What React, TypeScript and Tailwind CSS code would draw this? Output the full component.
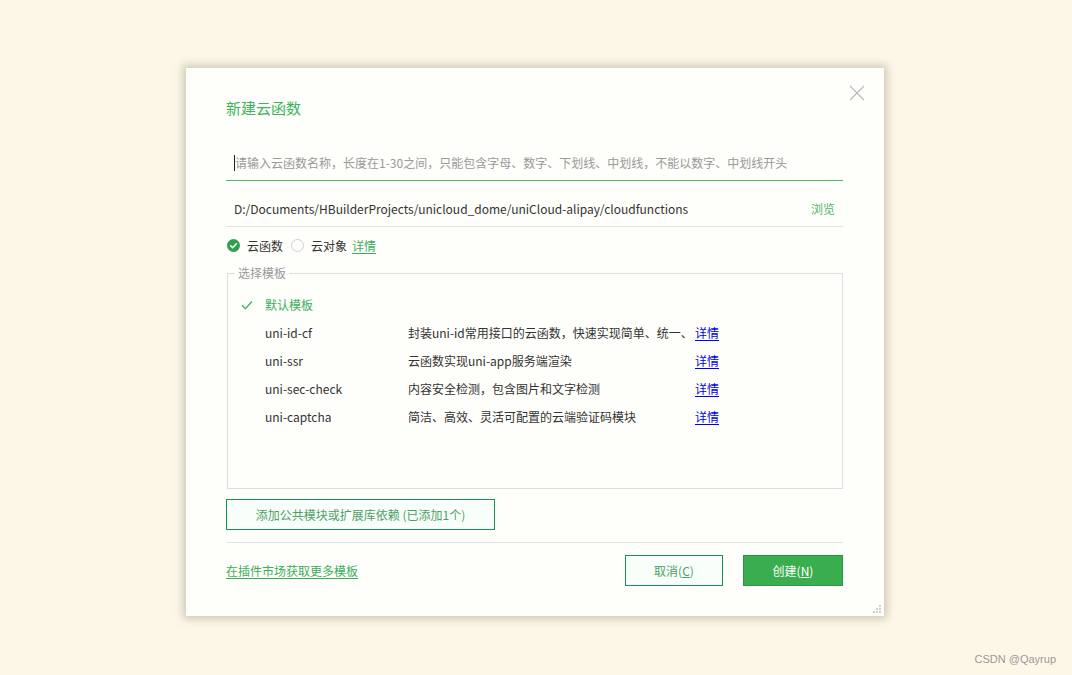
import React from 'react';

const templates = [
  { name: 'uni-id-cf', desc: '封装uni-id常用接口的云函数，快速实现简单、统一、' },
  { name: 'uni-ssr', desc: '云函数实现uni-app服务端渲染' },
  { name: 'uni-sec-check', desc: '内容安全检测，包含图片和文字检测' },
  { name: 'uni-captcha', desc: '简洁、高效、灵活可配置的云端验证码模块' },
];

function CloseIcon() {
  return (
    <svg width="16" height="16" viewBox="0 0 16 16" fill="none" stroke="#b8b8b8" strokeWidth={1.1}>
      <path d="M1 1L15 15M15 1L1 15" />
    </svg>
  );
}

function CheckedRadio() {
  return (
    <svg width="13" height="13" viewBox="0 0 13 13">
      <circle cx="6.5" cy="6.5" r="6.5" fill="#2f9e4f" />
      <path d="M3.6 6.7l2 2 3.8-3.9" fill="none" stroke="#fff" strokeWidth={1.6} strokeLinecap="round" strokeLinejoin="round" />
    </svg>
  );
}

function EmptyRadio() {
  return (
    <svg width="13" height="13" viewBox="0 0 13 13">
      <circle cx="6.5" cy="6.5" r="6" fill="#fff" stroke="#cfcfcf" strokeWidth={1} />
    </svg>
  );
}

function Tick() {
  return (
    <svg width="12" height="10" viewBox="0 0 12 10" fill="none" stroke="#3cae5a" strokeWidth={1.3}>
      <path d="M1 5.2l3.4 3.4L11 1.5" />
    </svg>
  );
}

export default function App() {
  return (
    <div
      className="min-h-[675px] w-full bg-[#fdf7e7] relative flex justify-center pt-[68px]"
      style={{ fontFamily: '"Noto Sans CJK SC", "Liberation Sans", sans-serif' }}
    >
      {/* dialog */}
      <div className="relative ml-[-2px] w-[698px] h-[548px] bg-[#fefefa] shadow-[0_0_8px_3px_rgba(120,115,95,0.35)] flex flex-col pl-10 pr-[41px] pt-[31px] text-[12px] text-[#333]">
        <button className="absolute right-[19px] top-[17px]">
          <CloseIcon />
        </button>

        <div className="text-[15px] leading-[18px] text-[#3db45b]">新建云函数</div>

        {/* name input */}
        <div className="mt-[28px] h-[36px] border-b border-[#4cb968] flex items-center pl-2">
          <span className="w-px h-[16px] bg-[#222]" />
          <span className="text-[#999] leading-[18px]">请输入云函数名称，长度在1-30之间，只能包含字母、数字、下划线、中划线，不能以数字、中划线开头</span>
        </div>

        {/* path */}
        <div className="flex items-center justify-between pl-2 pr-2 pt-[19px] pb-[9px] border-b border-[#e3e3e3] leading-[17px]">
          <span className="text-[#333]">D:/Documents/HBuilderProjects/unicloud_dome/uniCloud-alipay/cloudfunctions</span>
          <span className="text-[#52b56b]">浏览</span>
        </div>

        {/* type radios */}
        <div className="h-[37px] flex items-center pl-px">
          <CheckedRadio />
          <span className="ml-[7px]">云函数</span>
          <span className="ml-[8px]"><EmptyRadio /></span>
          <span className="ml-[7px]">云对象</span>
          <span className="ml-[5px] text-[#3cae5a] underline underline-offset-2">详情</span>
        </div>

        {/* templates */}
        <fieldset className="ml-px h-[225px] border border-[#dedede] pt-[9px]">
          <legend className="ml-[7px] px-[3px] text-[#9a9a9a] leading-[18px]">选择模板</legend>
          <div className="flex items-center h-[28px] pl-[13px]">
            <span className="w-[24px]"><Tick /></span>
            <span className="text-[#3cae5a]">默认模板</span>
          </div>
          {templates.map((t) => (
            <div key={t.name} className="flex items-center h-[28px] pl-[37px]">
              <span className="w-[143px]">{t.name}</span>
              <span className="w-[287px] whitespace-nowrap">{t.desc}</span>
              <span className="text-[#0000ee] underline underline-offset-2">详情</span>
            </div>
          ))}
        </fieldset>

        <div className="mt-[10px]">
          <button className="w-[269px] h-[31px] border border-[#17944f] bg-[#f8fef9] text-[#4e9e66] text-[12px]">
            添加公共模块或扩展库依赖 (已添加1个)
          </button>
        </div>

        <div className="mt-[12px] border-t border-[#e3e3e3] pt-[12px] flex items-center">
          <span className="text-[#3cae5a] underline underline-offset-2">在插件市场获取更多模板</span>
          <div className="ml-auto flex gap-[20px]">
            <button className="w-[98px] h-[31px] border border-[#17944f] bg-[#f8fef9] text-[#4e9e66]">
              取消(<span className="underline">C</span>)
            </button>
            <button className="w-[100px] h-[31px] border border-[#239a49] bg-[#3aad4f] text-white">
              创建(<span className="underline">N</span>)
            </button>
          </div>
        </div>

        {/* resize grip */}
        <div className="absolute right-[3px] bottom-[3px] grid grid-cols-3 gap-px">
          <span className="w-[2px] h-[2px]" />
          <span className="w-[2px] h-[2px]" />
          <span className="w-[2px] h-[2px] bg-[#cfcfcf]" />
          <span className="w-[2px] h-[2px]" />
          <span className="w-[2px] h-[2px] bg-[#cfcfcf]" />
          <span className="w-[2px] h-[2px] bg-[#cfcfcf]" />
          <span className="w-[2px] h-[2px] bg-[#cfcfcf]" />
          <span className="w-[2px] h-[2px] bg-[#cfcfcf]" />
          <span className="w-[2px] h-[2px] bg-[#cfcfcf]" />
        </div>
      </div>

      <div className="absolute right-[16px] bottom-[8px] text-[11px] text-[#999]" style={{ fontFamily: '"Liberation Sans", sans-serif' }}>
        CSDN @Qayrup
      </div>
    </div>
  );
}
